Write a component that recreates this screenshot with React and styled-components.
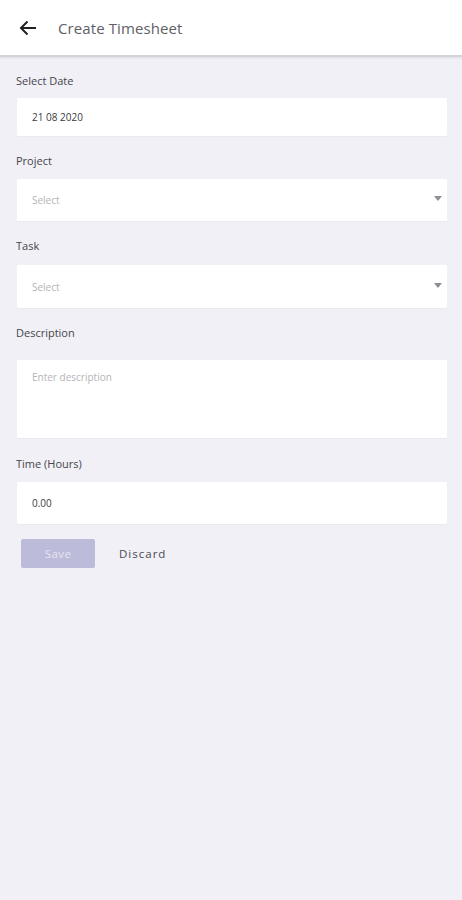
import styled, { createGlobalStyle } from "styled-components";

const GlobalStyle = createGlobalStyle`
  html, body {
    margin: 0;
    padding: 0;
    background: #f1f0f6;
    font-family: "Open Sans", "Noto Sans", sans-serif;
  }
`;

const Page = styled.div`
  min-height: 900px;
  background: #f1f0f6;
`;

const Header = styled.header`
  height: 55px;
  background: #ffffff;
  display: flex;
  align-items: center;
  padding-left: 18px;
  gap: 20px;
  border-bottom: 2px solid #d4d4d8;
  box-shadow: 0 1px 2px rgba(0, 0, 0, 0.08);
`;

const BackButton = styled.button`
  border: none;
  background: none;
  padding: 0;
  width: 20px;
  height: 20px;
  display: flex;
  align-items: center;
  justify-content: center;
  cursor: pointer;
`;

const Title = styled.h1`
  margin: 0;
  font-size: 15px;
  font-weight: 400;
  color: #606066;
  letter-spacing: 0.1px;
`;

const Form = styled.form`
  padding: 16px 15px 0 17px;
  display: flex;
  flex-direction: column;
`;

const Field = styled.div`
  display: flex;
  flex-direction: column;
  margin-bottom: ${(p) => p.$gap || 14}px;
`;

const Label = styled.label`
  font-size: 11px;
  color: #45454a;
  margin-left: -1px;
  margin-bottom: ${(p) => p.$gap || 10}px;
  line-height: 16px;
`;

const Box = styled.div`
  position: relative;
  background: #ffffff;
  height: ${(p) => p.$h}px;
  box-sizing: border-box;
  padding: ${(p) => (p.$top ? "10px 15px" : "0 15px")};
  display: flex;
  align-items: ${(p) => (p.$top ? "flex-start" : "center")};
  font-size: 10px;
  color: ${(p) => (p.$placeholder ? "#b4b4b9" : "#3a3a3f")};
  border-radius: 1px;
  box-shadow: 0 1px 1px rgba(0, 0, 0, 0.03);
`;

const Caret = styled.span`
  position: absolute;
  right: 5px;
  top: 50%;
  margin-top: -4px;
  width: 0;
  height: 0;
  border-left: 4px solid transparent;
  border-right: 4px solid transparent;
  border-top: 5px solid #8e8e94;
`;

const Actions = styled.div`
  display: flex;
  align-items: center;
  gap: 24px;
  padding-left: 4px;
  margin-top: 1px;
`;

const SaveButton = styled.button`
  width: 74px;
  height: 29px;
  border: none;
  border-radius: 2px;
  background: #bcbbd9;
  color: #e6e6f2;
  font-family: inherit;
  font-size: 11.5px;
  letter-spacing: 0.4px;
`;

const DiscardButton = styled.button`
  border: none;
  background: none;
  padding: 0;
  color: #4a4a50;
  font-family: inherit;
  font-size: 11.5px;
  letter-spacing: 1px;
`;

const ArrowIcon = () => (
  <svg width="18" height="16" viewBox="0 0 18 16" fill="none">
    <path d="M17 8H2M8.5 1.5L2 8l6.5 6.5" stroke="#222" strokeWidth="2" />
  </svg>
);

export default function App() {
  return (
    <Page>
      <GlobalStyle />
      <Header>
        <BackButton aria-label="Back">
          <ArrowIcon />
        </BackButton>
        <Title>Create Timesheet</Title>
      </Header>
      <Form>
        <Field $gap={17}>
          <Label $gap={9}>Select Date</Label>
          <Box $h={38}>21 08 2020</Box>
        </Field>
        <Field $gap={17}>
          <Label $gap={10}>Project</Label>
          <Box $h={42} $placeholder>
            Select
            <Caret />
          </Box>
        </Field>
        <Field $gap={17}>
          <Label $gap={11}>Task</Label>
          <Box $h={43} $placeholder>
            Select
            <Caret />
          </Box>
        </Field>
        <Field $gap={18}>
          <Label $gap={19}>Description</Label>
          <Box $h={78} $top $placeholder>
            Enter description
          </Box>
        </Field>
        <Field $gap={14}>
          <Label $gap={10}>Time (Hours)</Label>
          <Box $h={42}>0.00</Box>
        </Field>
        <Actions>
          <SaveButton type="button">Save</SaveButton>
          <DiscardButton type="button">Discard</DiscardButton>
        </Actions>
      </Form>
    </Page>
  );
}
